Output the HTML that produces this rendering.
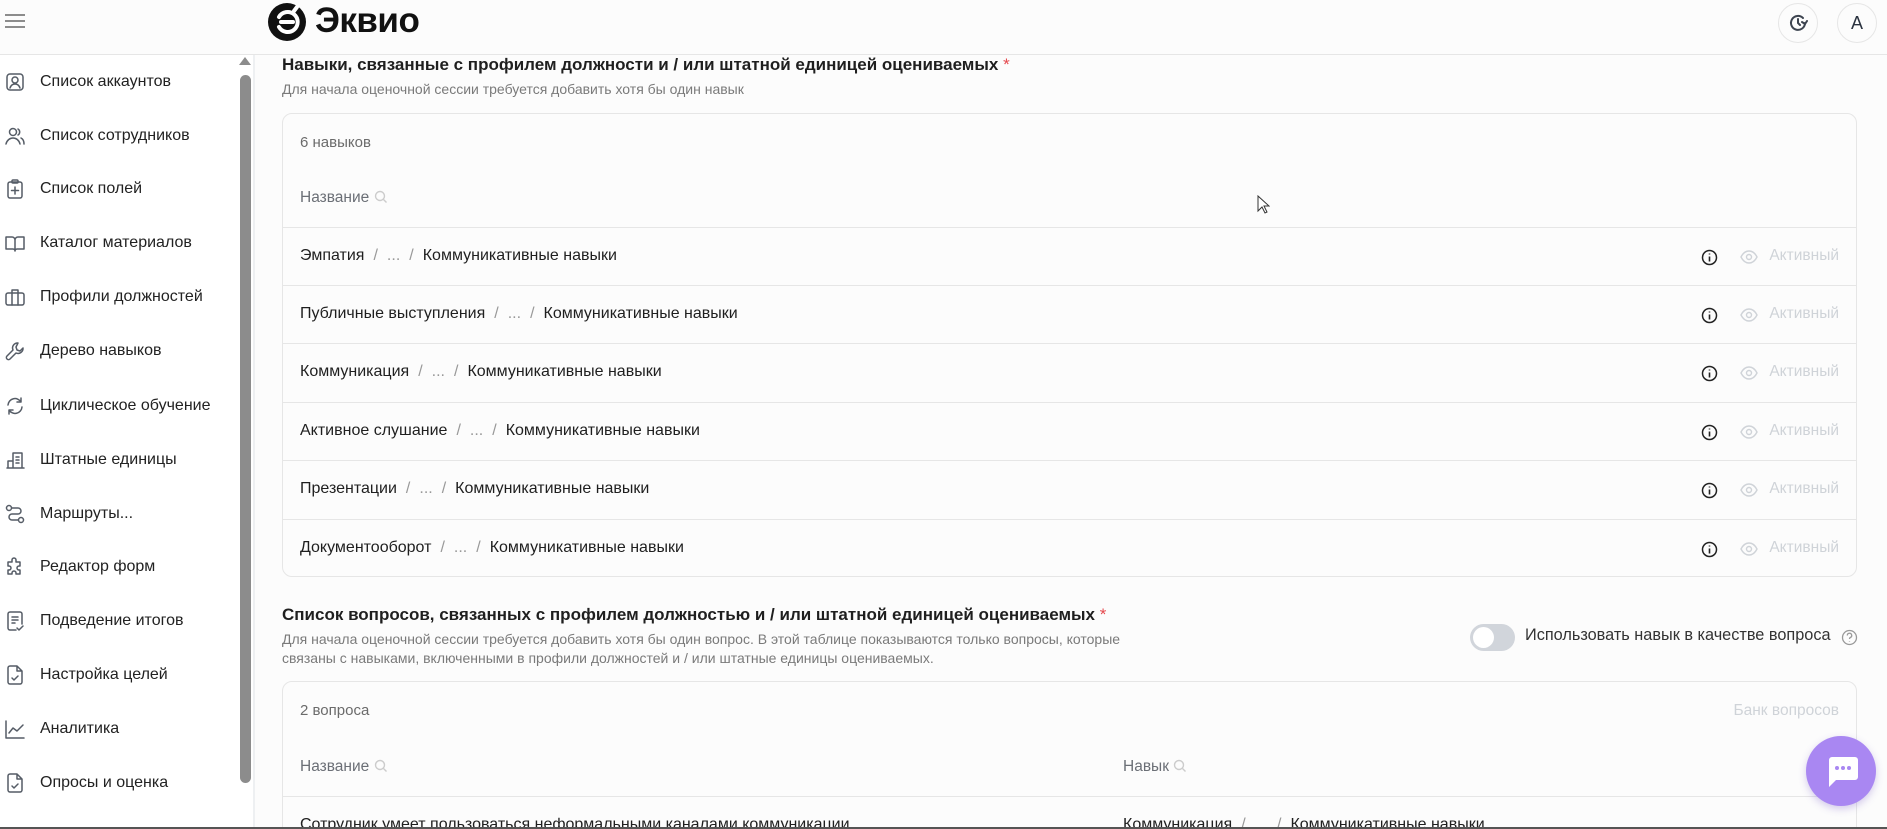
<!DOCTYPE html>
<html style="width:1887px;height:829px;overflow:hidden"><head><meta charset="utf-8">
<style>
*{box-sizing:border-box;margin:0;padding:0}
body{width:1887px;height:829px;overflow:hidden;background:#fcfcfc;font-family:"Liberation Sans",Arial,sans-serif;color:#1f1f1f;position:relative}
.hdr{position:absolute;left:0;top:0;width:1887px;height:55px;border-bottom:1px solid #e6e6e6;background:#fcfcfc}
.side{position:absolute;left:0;top:55px;width:255px;height:774px;background:#fff;border-right:2px solid #eef0f2}
.nav{position:absolute;left:0;height:30px;display:flex;align-items:center;font-size:16px;color:#222}
.nav svg{position:absolute;left:4px;width:22px;height:22px;fill:none;stroke:#555c66;stroke-width:1.5;stroke-linecap:round;stroke-linejoin:round}
.nav span{position:absolute;left:40px;white-space:nowrap}
.sb{position:absolute;left:240px;top:75px;width:11px;height:708px;background:#8c8c8c;border-radius:6px}
.card{position:absolute;left:282px;width:1575px;border:1px solid #e6e6e6;border-radius:10px;background:#fcfcfc;overflow:hidden}
.h1{position:absolute;left:282px;font-size:17px;font-weight:bold;color:#1f1f1f}
.h1 b{color:#e5484d;font-weight:normal}
.sub{position:absolute;left:282px;font-size:14px;color:#7a7a7a;line-height:19px}
.row{position:absolute;left:0;width:100%;border-top:1px solid #e6e6e6;height:58px}
.row .t{position:absolute;left:17px;top:19px;font-size:16px;color:#1f1f1f;white-space:nowrap}
.row .t i{font-style:normal;color:#999;margin:0 9px}
.row .act{position:absolute;right:17px;top:19px;font-size:15.5px;color:#cfd3d8}
.row .info{position:absolute;left:1418px;top:21px;width:17px;height:17px}
.row .eye{position:absolute;left:1457px;top:22px;width:18px;height:14px}
.gray{font-size:15px;color:#6b6b6b}
.hdtxt{font-size:15.5px;color:#6b6f76;font-weight:500}
</style></head><body>
<div class="hdr">
  <svg style="position:absolute;left:5px;top:14px" width="20" height="14" viewBox="0 0 20 14"><path d="M0 1H20M0 7H20M0 13H20" stroke="#666" stroke-width="1.6"/></svg>
  <svg style="position:absolute;left:267px;top:2px" width="40" height="40" viewBox="0 0 40 40"><circle cx="20" cy="20" r="19" fill="#111"/><path d="M12 15a10 10 0 1 1 0 10M14 20h12M27 9l3-4" stroke="#fff" stroke-width="4" fill="none" stroke-linecap="round"/></svg>
  <div style="position:absolute;left:315px;top:1px;font-size:35px;font-weight:bold;color:#111;letter-spacing:-0.5px">Эквио</div>
  <div style="position:absolute;left:1778px;top:3px;width:40px;height:40px;border:1px solid #e6e6e6;border-radius:50%"></div>
  <svg style="position:absolute;left:1788px;top:13px" width="20" height="20" viewBox="0 0 20 20" fill="none" stroke="#3d4450" stroke-width="2" stroke-linecap="round"><path d="M17 10a7 7 0 1 1-2-5"/><path d="M10 6v4l2 2M14 9l3 2 2-3"/></svg>
  <div style="position:absolute;left:1837px;top:3px;width:40px;height:40px;border:1px solid #e6e6e6;border-radius:50%;text-align:center;line-height:38px;font-size:18px;color:#2b3340">A</div>
</div>
<div class="side">
  <svg style="position:absolute;left:239px;top:2px" width="12" height="8"><path d="M6 0L12 8H0z" fill="#8c8c8c"/></svg>
</div>
<div class="sb"></div>

<div class="nav" style="top:67px"><svg viewBox="0 0 22 22"><rect x="3" y="3" width="16" height="16" rx="3"/><circle cx="11" cy="9" r="3"/><path d="M6 17c1-3 3-4 5-4s4 1 5 4"/></svg><span>Список аккаунтов</span></div>
<div class="nav" style="top:121px"><svg viewBox="0 0 22 22"><circle cx="9" cy="7" r="3.5"/><path d="M2 19c1-4 4-6 7-6s6 2 7 6M14 4a3.5 3.5 0 0 1 0 6M17 13c2 1 3 3 3 6"/></svg><span>Список сотрудников</span></div>
<div class="nav" style="top:174px"><svg viewBox="0 0 22 22"><rect x="4" y="4" width="14" height="16" rx="2"/><rect x="8" y="2" width="6" height="3" rx="1"/><path d="M11 9v7M7.5 12.5h7"/></svg><span>Список полей</span></div>
<div class="nav" style="top:228px"><svg viewBox="0 0 22 22"><path d="M2 5h6a3 3 0 0 1 3 3v11a2 2 0 0 0-2-2H2zM20 5h-6a3 3 0 0 0-3 3v11a2 2 0 0 1 2-2h7z"/></svg><span>Каталог материалов</span></div>
<div class="nav" style="top:282px"><svg viewBox="0 0 22 22"><rect x="2" y="7" width="18" height="12" rx="2"/><path d="M8 7V4h6v3M8 7v12M14 7v12"/></svg><span>Профили должностей</span></div>
<div class="nav" style="top:336px"><svg viewBox="0 0 22 22"><path d="M14 3a5 5 0 0 0-5 7l-6 6a2 2 0 0 0 3 3l6-6a5 5 0 0 0 7-5l-3 3-3-1-1-3z"/></svg><span>Дерево навыков</span></div>
<div class="nav" style="top:391px"><svg viewBox="0 0 22 22"><path d="M4 10a7 7 0 0 1 13-3M18 12a7 7 0 0 1-13 3M17 3v4h-4M5 19v-4h4"/></svg><span>Циклическое обучение</span></div>
<div class="nav" style="top:445px"><svg viewBox="0 0 22 22"><path d="M3 19h17M4 19v-7h5M9 19V4h9v15M12 8h3M12 11h3M12 14h3"/></svg><span>Штатные единицы</span></div>
<div class="nav" style="top:499px"><svg viewBox="0 0 22 22"><circle cx="5" cy="5" r="2.5"/><circle cx="17" cy="17" r="2.5"/><path d="M8 5h6a3 3 0 0 1 0 6H8a3 3 0 0 0 0 6h6"/></svg><span>Маршруты...</span></div>
<div class="nav" style="top:552px"><svg viewBox="0 0 22 22"><path d="M8 4a2 2 0 0 1 4 0v2h4v4h-1a2 2 0 0 0 0 4h1v4h-4v-1a2 2 0 0 0-4 0v1H4v-4h1a2 2 0 0 0 0-4H4V6h4z"/></svg><span>Редактор форм</span></div>
<div class="nav" style="top:606px"><svg viewBox="0 0 22 22"><path d="M12 20H6a2 2 0 0 1-2-2V4a2 2 0 0 1 2-2h10a2 2 0 0 1 2 2v10M8 7h6M8 10h6M8 13h3M13 18l2 2 4-4"/></svg><span>Подведение итогов</span></div>
<div class="nav" style="top:660px"><svg viewBox="0 0 22 22"><path d="M13 2H6a2 2 0 0 0-2 2v14a2 2 0 0 0 2 2h10a2 2 0 0 0 2-2V7zM13 2v5h5M8 14l2 2 4-4"/></svg><span>Настройка целей</span></div>
<div class="nav" style="top:714px"><svg viewBox="0 0 22 22"><path d="M2 3v17h18M5 15l4-5 4 3 6-6"/></svg><span>Аналитика</span></div>
<div class="nav" style="top:768px"><svg viewBox="0 0 22 22"><path d="M13 2H6a2 2 0 0 0-2 2v14a2 2 0 0 0 2 2h10a2 2 0 0 0 2-2V7zM13 2v5h5M8 14l2 2 4-4"/></svg><span>Опросы и оценка</span></div>

<div class="h1" style="top:55px">Навыки, связанные с профилем должности и / или штатной единицей оцениваемых <b>*</b></div>
<div class="sub" style="top:80px">Для начала оценочной сессии требуется добавить хотя бы один навык</div>

<div class="card" style="top:113px;height:464px">
  <div class="gray" style="position:absolute;left:17px;top:20px">6 навыков</div>
  <div class="hdtxt" style="position:absolute;left:17px;top:75px">Название <svg width="14" height="14" viewBox="0 0 14 14" style="vertical-align:-2px"><circle cx="6" cy="6" r="4.5" fill="none" stroke="#ccc" stroke-width="1.4"/><path d="M9.5 9.5l3 3" stroke="#ccc" stroke-width="1.4"/></svg></div>
  <div class="row" style="top:113px"><div class="t">Эмпатия<i>/</i><i style="margin:0">...</i><i>/</i>Коммуникативные навыки</div><svg class="info" viewBox="0 0 17 17"><circle cx="8.5" cy="8.5" r="7" fill="none" stroke="#222" stroke-width="1.5"/><path d="M8.5 7.5v5M8.5 4.5v1" stroke="#222" stroke-width="1.6"/></svg><svg class="eye" viewBox="0 0 18 14"><path d="M1 7c2-4 5-6 8-6s6 2 8 6c-2 4-5 6-8 6S3 11 1 7z" fill="none" stroke="#cfd3d8" stroke-width="1.4"/><circle cx="9" cy="7" r="2.5" fill="none" stroke="#cfd3d8" stroke-width="1.4"/></svg><div class="act">Активный</div></div>
  <div class="row" style="top:171px"><div class="t">Публичные выступления<i>/</i><i style="margin:0">...</i><i>/</i>Коммуникативные навыки</div><svg class="info" viewBox="0 0 17 17"><circle cx="8.5" cy="8.5" r="7" fill="none" stroke="#222" stroke-width="1.5"/><path d="M8.5 7.5v5M8.5 4.5v1" stroke="#222" stroke-width="1.6"/></svg><svg class="eye" viewBox="0 0 18 14"><path d="M1 7c2-4 5-6 8-6s6 2 8 6c-2 4-5 6-8 6S3 11 1 7z" fill="none" stroke="#cfd3d8" stroke-width="1.4"/><circle cx="9" cy="7" r="2.5" fill="none" stroke="#cfd3d8" stroke-width="1.4"/></svg><div class="act">Активный</div></div>
  <div class="row" style="top:229px"><div class="t">Коммуникация<i>/</i><i style="margin:0">...</i><i>/</i>Коммуникативные навыки</div><svg class="info" viewBox="0 0 17 17"><circle cx="8.5" cy="8.5" r="7" fill="none" stroke="#222" stroke-width="1.5"/><path d="M8.5 7.5v5M8.5 4.5v1" stroke="#222" stroke-width="1.6"/></svg><svg class="eye" viewBox="0 0 18 14"><path d="M1 7c2-4 5-6 8-6s6 2 8 6c-2 4-5 6-8 6S3 11 1 7z" fill="none" stroke="#cfd3d8" stroke-width="1.4"/><circle cx="9" cy="7" r="2.5" fill="none" stroke="#cfd3d8" stroke-width="1.4"/></svg><div class="act">Активный</div></div>
  <div class="row" style="top:288px"><div class="t">Активное слушание<i>/</i><i style="margin:0">...</i><i>/</i>Коммуникативные навыки</div><svg class="info" viewBox="0 0 17 17"><circle cx="8.5" cy="8.5" r="7" fill="none" stroke="#222" stroke-width="1.5"/><path d="M8.5 7.5v5M8.5 4.5v1" stroke="#222" stroke-width="1.6"/></svg><svg class="eye" viewBox="0 0 18 14"><path d="M1 7c2-4 5-6 8-6s6 2 8 6c-2 4-5 6-8 6S3 11 1 7z" fill="none" stroke="#cfd3d8" stroke-width="1.4"/><circle cx="9" cy="7" r="2.5" fill="none" stroke="#cfd3d8" stroke-width="1.4"/></svg><div class="act">Активный</div></div>
  <div class="row" style="top:346px"><div class="t">Презентации<i>/</i><i style="margin:0">...</i><i>/</i>Коммуникативные навыки</div><svg class="info" viewBox="0 0 17 17"><circle cx="8.5" cy="8.5" r="7" fill="none" stroke="#222" stroke-width="1.5"/><path d="M8.5 7.5v5M8.5 4.5v1" stroke="#222" stroke-width="1.6"/></svg><svg class="eye" viewBox="0 0 18 14"><path d="M1 7c2-4 5-6 8-6s6 2 8 6c-2 4-5 6-8 6S3 11 1 7z" fill="none" stroke="#cfd3d8" stroke-width="1.4"/><circle cx="9" cy="7" r="2.5" fill="none" stroke="#cfd3d8" stroke-width="1.4"/></svg><div class="act">Активный</div></div>
  <div class="row" style="top:405px"><div class="t">Документооборот<i>/</i><i style="margin:0">...</i><i>/</i>Коммуникативные навыки</div><svg class="info" viewBox="0 0 17 17"><circle cx="8.5" cy="8.5" r="7" fill="none" stroke="#222" stroke-width="1.5"/><path d="M8.5 7.5v5M8.5 4.5v1" stroke="#222" stroke-width="1.6"/></svg><svg class="eye" viewBox="0 0 18 14"><path d="M1 7c2-4 5-6 8-6s6 2 8 6c-2 4-5 6-8 6S3 11 1 7z" fill="none" stroke="#cfd3d8" stroke-width="1.4"/><circle cx="9" cy="7" r="2.5" fill="none" stroke="#cfd3d8" stroke-width="1.4"/></svg><div class="act">Активный</div></div>
</div>

<svg style="position:absolute;left:1257px;top:195px" width="13" height="20" viewBox="0 0 13 20"><path d="M1 1v15l4-4 3 6 2-1-3-6h5z" fill="#fff" stroke="#333" stroke-width="1"/></svg>

<div class="h1" style="top:605px">Список вопросов, связанных с профилем должностью и / или штатной единицей оцениваемых <b>*</b></div>
<div class="sub" style="top:630px;width:890px">Для начала оценочной сессии требуется добавить хотя бы один вопрос. В этой таблице показываются только вопросы, которые связаны с навыками, включенными в профили должностей и / или штатные единицы оцениваемых.</div>

<div style="position:absolute;left:1470px;top:624px;width:45px;height:27px;border-radius:14px;background:#d1d5db"></div>
<div style="position:absolute;left:1473px;top:627px;width:21px;height:21px;border-radius:50%;background:#fff"></div>
<div style="position:absolute;left:1525px;top:626px;font-size:16.3px;color:#333">Использовать навык в качестве вопроса</div>
<svg style="position:absolute;left:1841px;top:629px" width="17" height="17" viewBox="0 0 17 17"><circle cx="8.5" cy="8.5" r="7" fill="none" stroke="#999" stroke-width="1.3"/><path d="M6.3 6.5a2.2 2.2 0 1 1 3 2c-.6.3-.8.7-.8 1.5M8.5 12v.5" fill="none" stroke="#999" stroke-width="1.3"/></svg>

<div class="card" style="top:681px;height:170px">
  <div class="gray" style="position:absolute;left:17px;top:20px">2 вопроса</div>
  <div style="position:absolute;right:17px;top:20px;font-size:15.5px;color:#cfd3d8">Банк вопросов</div>
  <div class="hdtxt" style="position:absolute;left:17px;top:76px">Название <svg width="14" height="14" viewBox="0 0 14 14" style="vertical-align:-2px"><circle cx="6" cy="6" r="4.5" fill="none" stroke="#ccc" stroke-width="1.4"/><path d="M9.5 9.5l3 3" stroke="#ccc" stroke-width="1.4"/></svg></div>
  <div class="hdtxt" style="position:absolute;left:840px;top:76px">Навык <svg width="14" height="14" viewBox="0 0 14 14" style="vertical-align:-2px"><circle cx="6" cy="6" r="4.5" fill="none" stroke="#ccc" stroke-width="1.4"/><path d="M9.5 9.5l3 3" stroke="#ccc" stroke-width="1.4"/></svg></div>
  <div class="row" style="top:114px"><div class="t">Сотрудник умеет пользоваться неформальными каналами коммуникации.</div><div class="t" style="left:840px">Коммуникация<i>/</i><i style="margin:0">...</i><i>/</i>Коммуникативные навыки</div></div>
</div>

<div style="position:absolute;left:1806px;top:736px;width:70px;height:70px;border-radius:50%;background:#a987f2;box-shadow:0 3px 8px rgba(120,90,200,.3)"></div>
<svg style="position:absolute;left:1825px;top:756px" width="34" height="32" viewBox="0 0 34 32"><path d="M4 1h26a3 3 0 0 1 3 3v17a3 3 0 0 1-3 3H11l-7 7V4a3 3 0 0 1 3-3z" fill="#fff"/><circle cx="12" cy="12" r="2" fill="#a987f2"/><circle cx="18" cy="12" r="2" fill="#a987f2"/><circle cx="24" cy="12" r="2" fill="#a987f2"/></svg>

<div style="position:absolute;left:0;top:827px;width:1887px;height:2px;background:#555"></div>
</body></html>
